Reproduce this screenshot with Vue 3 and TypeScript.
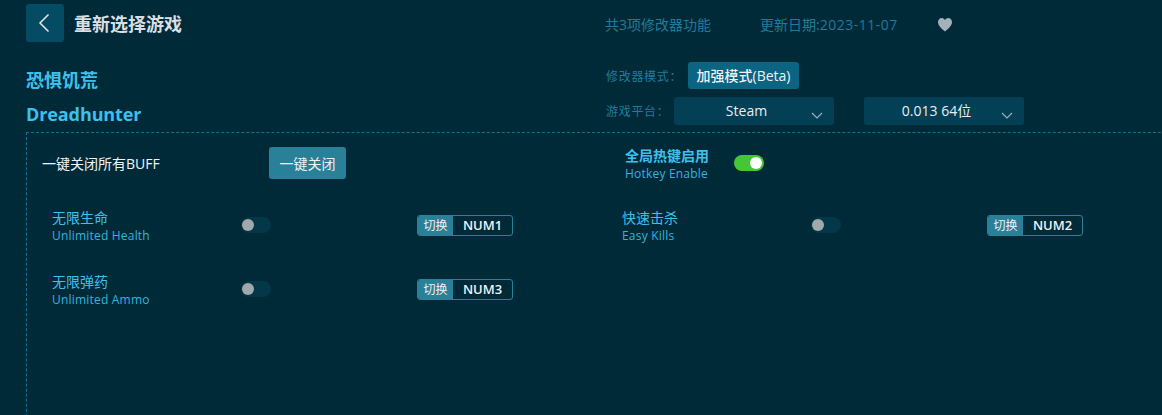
<template>
  <div class="page">
    <header class="top">
      <div class="top-left">
        <div class="head">
          <button class="back">
            <svg width="14" height="20" viewBox="0 0 14 20" fill="none">
              <path d="M10.500 1.500 2 10l8.500 8.500" stroke="#e4e9ec" stroke-width="1.500" />
            </svg>
          </button>
          <span class="head-title">重新选择游戏</span>
        </div>
        <div class="game-cn">恐惧饥荒</div>
        <div class="game-en">Dreadhunter</div>
      </div>
      <div class="top-right">
        <div class="info">
          <span class="count">共3项修改器功能</span>
          <span class="date">更新日期:<span class="date-num">2023-11-07</span></span>
          <svg class="heart" width="16" height="15" viewBox="0 0 16 15">
            <path d="M8 14.500C5 12 1 9 1 5c0-2.300 1.700-4 3.700-4C6 1 7.300 1.700 8 3c.7-1.300 2-2 3.300-2C13.300 1 15 2.700 15 5c0 4-4 7-7 9.500Z" fill="#a3b1ba" />
          </svg>
        </div>
        <div class="mode">
          <span class="opt-label">修改器模式：</span>
          <span class="pill">加强模式(Beta)</span>
        </div>
        <div class="platform">
          <span class="opt-label">游戏平台：</span>
          <div v-for="s in selects" :key="s" class="select">
            <span>{{ s }}</span>
            <svg class="caret" width="12" height="7" viewBox="0 0 12 7" fill="none">
              <path d="M1 1l5 5 5-5" stroke="#9fb4bf" stroke-width="1.100" />
            </svg>
          </div>
        </div>
      </div>
    </header>

    <section class="panel">
      <div class="panel-top">
        <div class="all-off">
          <span class="all-off-text">一键关闭所有BUFF</span>
          <button class="all-off-btn">一键关闭</button>
        </div>
        <div class="hotkey-enable">
          <div class="hotkey-text">
            <div class="hk-cn">全局热键启用</div>
            <div class="hk-en">Hotkey Enable</div>
          </div>
          <span class="switch on"><i></i></span>
        </div>
      </div>
      <div class="items">
        <div v-for="item in items" :key="item.en" class="item">
          <div class="item-text">
            <div class="item-cn">{{ item.cn }}</div>
            <div class="item-en">{{ item.en }}</div>
          </div>
          <span class="switch"><i></i></span>
          <div class="key">
            <span class="key-tag">切换</span>
            <span class="key-name">{{ item.key }}</span>
          </div>
        </div>
      </div>
    </section>
  </div>
</template>

<script setup lang="ts">
interface Item {
  cn: string;
  en: string;
  key: string;
}

const selects: string[] = ['Steam', '0.013 64位'];

const items: Item[] = [
  { cn: '无限生命', en: 'Unlimited Health', key: 'NUM1' },
  { cn: '快速击杀', en: 'Easy Kills', key: 'NUM2' },
  { cn: '无限弹药', en: 'Unlimited Ammo', key: 'NUM3' }
];
</script>

<style>
html,
body {
  margin: 0;
  background: #012a39;
}
</style>

<style scoped>
.page {
  width: 1162px;
  height: 415px;
  overflow: hidden;
  background: #012a39;
  padding-left: 26px;
  box-sizing: border-box;
  font-family: "Open Sans", "Noto Sans CJK SC", sans-serif;
}

.top {
  display: flex;
  height: 132px;
}

.top-left {
  width: 579px;
  padding-top: 4px;
}

.head {
  display: flex;
  align-items: flex-start;
  gap: 10px;
}

.back {
  width: 38px;
  height: 38px;
  padding: 0;
  border: none;
  border-radius: 3px;
  background: #044b63;
  display: flex;
  align-items: center;
  justify-content: center;
}

.head-title {
  padding-top: 1px;
  font-size: 18px;
  font-weight: 700;
  line-height: 38px;
  color: #d9dfe2;
}

.game-cn {
  margin-top: 24px;
  font-size: 18px;
  font-weight: 700;
  line-height: 26px;
  color: #3dc1ec;
}

.game-en {
  margin-top: 8px;
  font-size: 18px;
  font-weight: 700;
  line-height: 26px;
  letter-spacing: -0.1px;
  color: #3dc1ec;
}

.top-right {
  flex: 1;
}

.info {
  display: flex;
  align-items: center;
  height: 16px;
  margin-top: 16px;
  font-size: 14px;
  color: #1f7b9c;
}

.count {
  width: 155px;
}

.date {
  width: 177px;
}

.date-num {
  letter-spacing: 0.5px;
}

.mode {
  display: flex;
  align-items: center;
  margin-top: 30px;
  height: 27px;
}

.opt-label {
  font-size: 12px;
  color: #1f7b9c;
  letter-spacing: 0.7px;
  padding-left: 1px;
}

.mode .opt-label {
  width: 82px;
}

.pill {
  width: 111px;
  height: 27px;
  border-radius: 3px;
  background: #0a6482;
  color: #eef3f5;
  font-size: 14px;
  font-weight: 500;
  line-height: 27px;
  text-align: center;
}

.platform {
  display: flex;
  align-items: center;
  margin-top: 8px;
}

.platform .opt-label {
  width: 68px;
}

.select {
  position: relative;
  width: 160px;
  height: 28px;
  margin-right: 30px;
  border-radius: 3px;
  background: #033f55;
  color: #e9eef0;
  font-size: 14px;
  line-height: 28px;
  text-align: center;
  padding-right: 15px;
  box-sizing: border-box;
}

.caret {
  position: absolute;
  right: 11px;
  top: 15px;
}

.panel {
  width: 1180px;
  height: 320px;
  box-sizing: border-box;
  border: 1px dashed #15708f;
  padding: 14px 0 0 15px;
}

.panel-top {
  display: flex;
  height: 32px;
}

.all-off {
  display: flex;
  align-items: center;
  width: 583px;
}

.all-off-text {
  width: 227px;
  font-size: 14px;
  color: #f1f4f6;
}

.all-off-btn {
  width: 77px;
  height: 32px;
  padding: 0;
  border: none;
  border-radius: 3px;
  background: #288099;
  color: #eef3f5;
  font-family: inherit;
  font-size: 14px;
}

.hotkey-enable {
  display: flex;
  align-items: center;
}

.hotkey-text {
  width: 109px;
  margin-top: 2px;
}

.hk-cn {
  font-size: 14px;
  font-weight: 700;
  line-height: 18px;
  color: #3dc1ec;
}

.hk-en {
  font-size: 12px;
  line-height: 17px;
  letter-spacing: 0.2px;
  color: #33b4dd;
}

.items {
  display: grid;
  grid-template-columns: 570px 570px;
  grid-auto-rows: 64px;
  margin-top: 28px;
  padding-left: 10px;
}

.item {
  display: flex;
  align-items: center;
  height: 36px;
}

.item-text {
  width: 189px;
  margin-top: 2px;
}

.item-cn {
  font-size: 14px;
  line-height: 18px;
  color: #3dc1ec;
}

.item-en {
  font-size: 12px;
  line-height: 17px;
  letter-spacing: 0.2px;
  color: #33b4dd;
}

.switch {
  position: relative;
  display: block;
  width: 30px;
  height: 16px;
  border-radius: 8px;
  background: #03384b;
}

.switch i {
  position: absolute;
  left: 1px;
  top: 2px;
  width: 12px;
  height: 12px;
  border-radius: 50%;
  background: #a3a8ac;
}

.switch.on {
  background: #45c637;
}

.switch.on i {
  left: 16px;
  background: #fff;
}

.key {
  display: flex;
  width: 96px;
  height: 21px;
  margin-left: 146px;
  box-sizing: border-box;
  border: 1px solid #288099;
  border-radius: 3px;
  overflow: hidden;
  font-size: 12px;
  line-height: 19px;
  color: #eef2f4;
}

.key-tag {
  width: 35px;
  background: #288099;
  text-align: center;
}

.key-name {
  flex: 1;
  text-align: center;
  font-size: 13px;
  font-weight: 600;
}
</style>
